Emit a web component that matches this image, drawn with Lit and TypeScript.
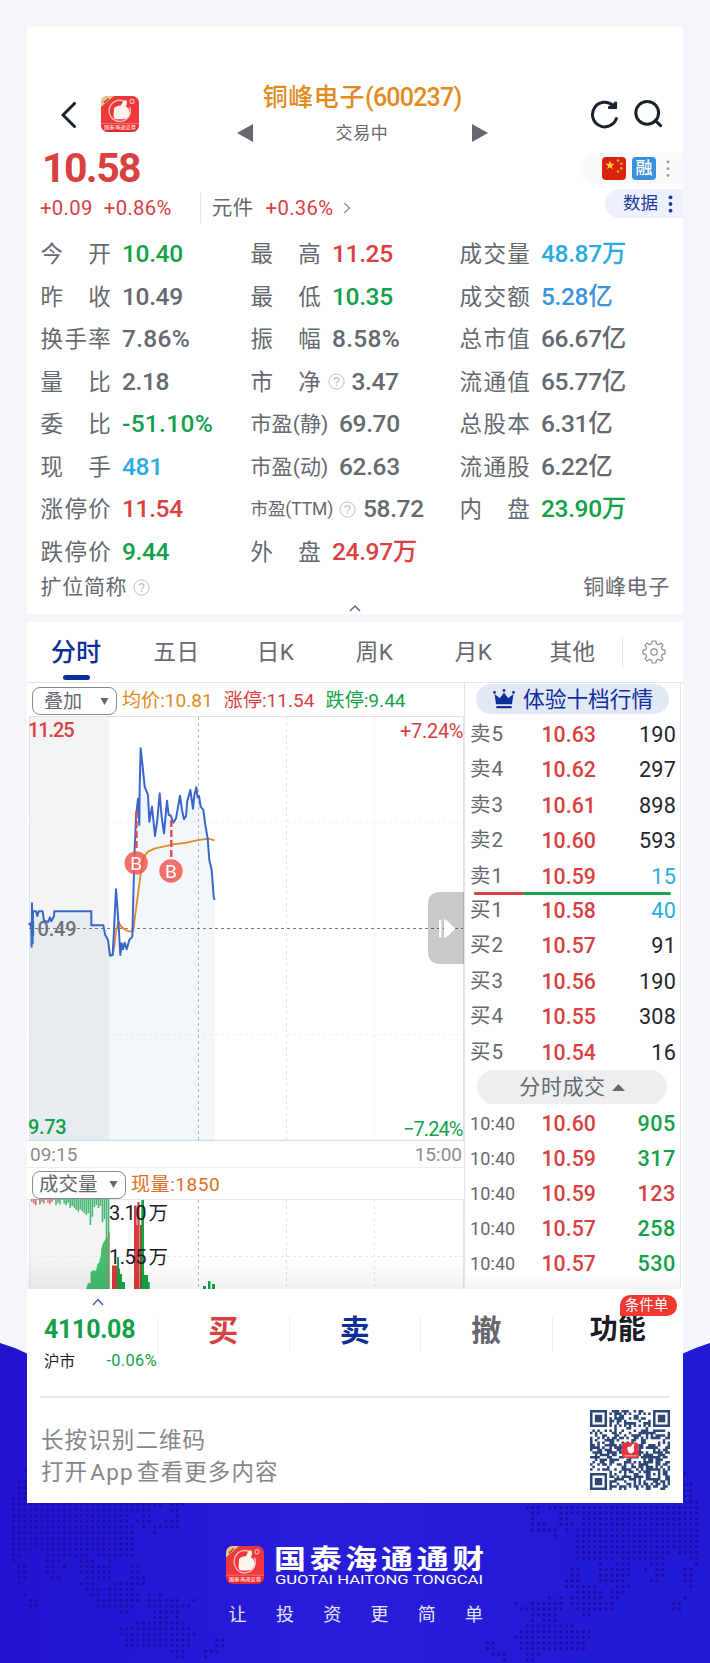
import { LitElement, html, svg, css } from "lit";
import { customElement } from "lit/decorators.js";

type Cell = { label: string; value: string; tone?: string; kind?: string; help?: boolean };

const QUOTES: Cell[][] = [
  [
    { label: "今　开", value: "10.40", tone: "green" },
    { label: "昨　收", value: "10.49" },
    { label: "换手率", value: "7.86%" },
    { label: "量　比", value: "2.18" },
    { label: "委　比", value: "-51.10%", tone: "green" },
    { label: "现　手", value: "481", tone: "cyan" },
    { label: "涨停价", value: "11.54", tone: "red" },
    { label: "跌停价", value: "9.44", tone: "green" },
  ],
  [
    { label: "最　高", value: "11.25", tone: "red" },
    { label: "最　低", value: "10.35", tone: "green" },
    { label: "振　幅", value: "8.58%" },
    { label: "市　净", value: "3.47", help: true },
    { label: "市盈(静)", value: "69.70", kind: "pe" },
    { label: "市盈(动)", value: "62.63", kind: "pe" },
    { label: "市盈(TTM)", value: "58.72", kind: "ttm", help: true },
    { label: "外　盘", value: "24.97万", tone: "red" },
  ],
  [
    { label: "成交量", value: "48.87万", tone: "cyan" },
    { label: "成交额", value: "5.28亿", tone: "azure" },
    { label: "总市值", value: "66.67亿" },
    { label: "流通值", value: "65.77亿" },
    { label: "总股本", value: "6.31亿" },
    { label: "流通股", value: "6.22亿" },
    { label: "内　盘", value: "23.90万", tone: "green" },
  ],
];

const SELLS = [
  ["卖5", "10.63", "190"],
  ["卖4", "10.62", "297"],
  ["卖3", "10.61", "898"],
  ["卖2", "10.60", "593"],
  ["卖1", "10.59", "15"],
];
const BUYS = [
  ["买1", "10.58", "40"],
  ["买2", "10.57", "91"],
  ["买3", "10.56", "190"],
  ["买4", "10.55", "308"],
  ["买5", "10.54", "16"],
];
const TRADES = [
  ["10:40", "10.60", "905", "green"],
  ["10:40", "10.59", "317", "green"],
  ["10:40", "10.59", "123", "red"],
  ["10:40", "10.57", "258", "green"],
  ["10:40", "10.57", "530", "green"],
];

// Price curve, in thirds of a pixel.
const PRICE =
  "30,640 34,655 35,710 36,580 38,700 39,604 48,604 52,618 56,604 68,604 72,632 84,636 90,622 94,634 102,618 103,604 214,604 214,646 250,646 256,676 264,690 270,737 278,735 282,660 288,538 292,590 296,650 301,735 305,700 309,718 314,698 320,718 328,690 337,680 340,560 343,440 348,320 354,266 358,345 359,230 362,115 368,170 374,230 384,255 388,335 396,290 405,378 412,330 419,250 425,320 432,370 441,272 446,315 452,316 460,338 468,325 480,257 486,300 492,328 498,318 502,272 511,240 519,296 523,255 529,232 533,262 537,258 542,290 550,300 556,345 563,385 568,450 575,480 581,560 584,570";
const AVERAGE =
  "270,737 278,735 283,710 288,665 296,635 302,648 315,660 330,665 340,662 345,620 355,545 365,470 372,440 384,425 405,415 430,410 460,403 500,398 530,391 565,386 584,391";

// Dotted world map: [row, [fromCol, toCol]...]
const MAP: [number, ...number[][]][] = [
  [0, [2, 2]], [2, [1, 2]], [3, [1, 2]], [4, [1, 2]], [5, [0, 2]],
  [6, [0, 26], [28, 30]], [7, [0, 24], [28, 29]], [8, [0, 20], [23, 24], [29, 29]],
  [9, [0, 20], [22, 24], [27, 29]], [10, [0, 21], [23, 23], [25, 29]], [11, [0, 21], [25, 25]],
  [12, [0, 21]], [13, [0, 21]], [14, [0, 3], [5, 21]], [15, [0, 1], [6, 13], [15, 21]],
  [16, [0, 0], [6, 8], [12, 14], [17, 17]], [17, [1, 2], [6, 7], [9, 9], [12, 17], [21, 22]],
  [18, [1, 2], [6, 7], [12, 17], [21, 22]], [19, [1, 2], [7, 8], [13, 17], [21, 23]],
  [20, [1, 1], [12, 14], [18, 23]], [21, [13, 15], [17, 21]],
  [22, [2, 2], [14, 15], [17, 22], [24, 24], [26, 26]], [23, [3, 4], [15, 22], [24, 29], [32, 32]],
  [24, [3, 4], [15, 21], [24, 27], [28, 31]], [25, [19, 20], [25, 29]], [26, [25, 27], [29, 29]],
  [27, [22, 30]], [28, [19, 31]], [29, [19, 32]], [30, [20, 31], [36, 37]],
  [31, [20, 31], [36, 37]], [32, [28, 30], [34, 36]], [33, [29, 30], [34, 34]],
];
const mapPath = MAP.map(([r, ...runs]) =>
  runs
    .map(([a, b]) => {
      let d = "";
      for (let c = a; c <= b; c++) d += `M${(12 + c * 5.65).toFixed(1)} ${(1469 + r * 5.65).toFixed(1)}h3v3h-3z`;
      return d;
    })
    .join(""),
).join("");

// 33 x 33 matrix code with three finder squares and one alignment square.
function codePath(): string {
  const n = 33;
  let seed = 20237;
  const rnd = () => ((seed = (seed * 1103515245 + 12345) & 0x7fffffff) >> 12) % 100;
  const square = (x: number, y: number, size: number, i: number, j: number) => {
    const dx = i - x, dy = j - y, m = size - 1;
    if (dx < 0 || dy < 0 || dx > m || dy > m) return null;
    const ring = Math.min(dx, dy, m - dx, m - dy);
    return ring !== 1;
  };
  let d = "";
  for (let j = 0; j < n; j++)
    for (let i = 0; i < n; i++) {
      const r = rnd() < 51;
      let on: boolean | null =
        square(0, 0, 7, i, j) ?? square(n - 7, 0, 7, i, j) ?? square(0, n - 7, 7, i, j) ?? square(24, 24, 5, i, j);
      if (on === null) {
        const quiet = (i < 8 && j < 8) || (i > n - 9 && j < 8) || (i < 8 && j > n - 9);
        on = quiet ? false : i === 6 ? j % 2 === 0 : j === 6 ? i % 2 === 0 : r;
      }
      if (on) d += `M${i} ${j}h1.04v1.04h-1.04z`;
    }
  return d;
}
const CODE = codePath();

const appIcon = (cls: string) => html`<svg class=${cls} viewBox="0 0 38 36" preserveAspectRatio="none">
  <defs>
    <linearGradient id="ig" x1="0" y1="0" x2="0" y2="1">
      <stop offset="0" stop-color="#e8373b" /><stop offset=".7" stop-color="#f4383d" /><stop offset="1" stop-color="#e2242c" />
    </linearGradient>
    <clipPath id="ic"><rect width="38" height="36" rx="6.5" /></clipPath>
  </defs>
  <g clip-path="url(#ic)">
    <rect width="38" height="36" fill="url(#ig)" />
    <path d="M0 0H13L0 11Z" fill="#e9c48c" />
    <path d="M3 6.5L8 2.4" stroke="#8c4a28" stroke-width="2" stroke-dasharray="1.5 .6" />
    <path d="M23 5.2A10.6 10.6 0 1 0 28.6 11" fill="none" stroke="#ffb9b6" stroke-width="1.4" />
    <path d="M13 12.5Q15 9.5 20 9.6L22.2 5Q25.2 3 26 5.6Q26.3 8 24.8 10.6Q28.6 12 28.6 17Q28 23 21.5 23.3H15.5Q12.8 23 12.6 20Z" fill="#fff3ee" />
    <circle cx="31" cy="5.4" r="2" fill="none" stroke="#ffb5b2" stroke-width="1.1" />
    <path d="M0 27.6H38" stroke="#ff8d88" stroke-width=".7" />
    <text x="3" y="33.4" font-size="4.8" font-weight="500" fill="#ffd9d6" textLength="32" lengthAdjust="spacingAndGlyphs">国泰海通证券</text>
  </g>
</svg>`;

const helpIcon = html`<svg class="help" width="17" height="17" viewBox="0 0 17 17" fill="none" stroke="#bfc0c4">
  <circle cx="8.5" cy="8.5" r="7.6" stroke-width="1" />
  <path d="M5.9 6.9Q6.2 4.7 8.6 4.7Q11 4.8 11 6.7Q11 8 9.6 8.7Q8.5 9.2 8.5 10.4" stroke-width="1.2" />
  <path d="M8.5 11.6V13" stroke-width="1.2" />
</svg>`;

// Bars hanging from the top of the volume pane: [x, height, colour].
const hanging: [number, number, string][] = [];
for (let i = 0; i < 39; i++) {
  const x = 4 + i * 2.02;
  const red = i < 11 && i !== 4 && i !== 7;
  let h = 3 + ((i * 7) % 5) * 0.8;
  if (i > 18) h = 5 + (i - 18) * 0.9 + ((i * 5) % 4);
  if (i === 29) h = 26;
  if (i > 30 && i < 35) h = 5 + ((i * 3) % 5);
  if (i === 35 || i === 36) h = 20 + (i % 2) * 3;
  if (i > 36) h = 40;
  hanging.push([x, i < 19 && i % 4 === 3 ? 0.8 : h, red ? "#d9767a" : "#45b873"]);
}

@customElement("app-root")
export class AppRoot extends LitElement {
  static styles = css`
    :host {
      display: block;
      width: 710px;
      height: 1663px;
      overflow: hidden;
      background: #f4f6fb;
      font-family: Roboto, "Noto Sans CJK SC", sans-serif;
      color: #66686f;
    }
    * { box-sizing: border-box; }
    svg { display: block; flex: none; }
    svg text { font-family: Roboto, "Noto Sans CJK SC", sans-serif; }
    .page { display: grid; width: 710px; height: 1663px; }
    .backdrop { grid-area: 1 / 1; }
    .content { grid-area: 1 / 1; display: flex; flex-direction: column; padding: 27px 27px 0; }
    .red { color: #d8413f; }
    .green { color: #12a149; }
    .cyan { color: #2aabe2; }
    .azure { color: #3c93dd; }
    .card { background: #fff; width: 656px; }
    .trade { margin-top: 8px; }

    .quote { height: 587px; display: flex; flex-direction: column; }
    .head { display: flex; height: 122px; padding: 49px 20px 0 34px; align-items: flex-start; }
    .back { margin-top: 26px; }
    .app { width: 38px; height: 36px; margin: 20px 0 0 25px; }
    .title { flex: 1; display: flex; flex-direction: column; align-items: center; width: 252px; margin: 0 75px 0 71px; }
    .name { height: 43px; line-height: 44px; font-size: 25px; font-weight: 500; color: #e18a20; white-space: nowrap; letter-spacing: .6px; }
    .name span { letter-spacing: -.8px; }
    .state { display: flex; width: 251px; justify-content: space-between; align-items: center; height: 27px; font-size: 17px; line-height: 24px; letter-spacing: .6px; }
    .refresh { margin-top: 23px; }
    .search { margin: 23px 0 0 14px; }

    .mid { display: flex; height: 80px; padding-left: 14px; justify-content: space-between; }
    .price { font-size: 41px; font-weight: 700; height: 39px; line-height: 38px; letter-spacing: -1.6px; padding-left: 1px; }
    .change { display: flex; align-items: center; height: 40px; line-height: 40px; font-size: 20.3px; letter-spacing: .35px; margin-left: -1px; }
    .change .pct { margin-left: 11px; }
    .bar { width: 1px; height: 30px; background: #e4e5e8; margin: 0 11px 0 28px; }
    .sector { font-size: 20.5px; margin-right: 12px; }
    .next { margin-left: 9px; }
    .tags { display: flex; flex-direction: column; align-items: flex-end; padding-top: 4px; }
    .tag1 { display: flex; align-items: center; width: 103px; height: 31px; border-radius: 16px 0 0 16px; background: #fafafa; padding-left: 22px; }
    .rong { width: 24px; height: 23px; line-height: 22px; border-radius: 4px; background: #3b8fdc; color: #fff; font-size: 17px; font-weight: 500; text-align: center; margin: 0 10px 0 6px; }
    .tag2 { display: flex; align-items: center; width: 78px; height: 29px; margin-top: 5px; border-radius: 15px 0 0 15px; background: #edf0fd; padding-left: 18px; color: #1c3a9c; font-size: 17.5px; line-height: 25px; }
    .tag2 svg { margin-left: 10px; }

    .grid { display: grid; grid-template-columns: 210px 209px 1fr; padding: 4px 0 0 13.5px; }
    .cell { display: flex; align-items: center; height: 42.5px; line-height: 30px; }
    .label { width: 81.5px; font-size: 22.5px; letter-spacing: 1.4px; white-space: nowrap; }
    .label.short { width: 77px; }
    .label.pe { width: 88.5px; font-size: 21px; letter-spacing: .1px; }
    .label.ttm { width: 88.5px; font-size: 17.5px; letter-spacing: -.1px; }
    .help { margin-right: 7px; }
    .value { font-size: 24.5px; font-weight: 500; white-space: nowrap; letter-spacing: -.35px; }
    .value.ratioed { letter-spacing: .3px; }
    .alias { display: flex; align-items: center; justify-content: space-between; height: 28px; line-height: 28px; padding: 0 13px 0 13.5px; font-size: 21px; letter-spacing: .7px; }
    .alias div { display: flex; align-items: center; gap: 6px; }
    .fold { margin: 3px auto 0; }

    .tabs { display: flex; height: 61px; border-bottom: 1px solid #e4e6e9; align-items: center; }
    .tab { width: 99px; height: 60px; line-height: 61px; text-align: center; font-size: 22.5px; letter-spacing: .5px; padding-left: 2px; }
    .tab.on { display: flex; flex-direction: column; align-items: center; font-size: 25.2px; font-weight: 500; color: #0b2f98; letter-spacing: 0; padding: 0 1px 0 0; }
    .tab.on i { width: 27px; height: 5px; border-radius: 3px; background: #0b2f98; margin-top: -8px; flex: none; }
    .gearbox { height: 31px; border-left: 1px solid #e8e9ec; padding: 3px 0 0 19px; margin-left: 1px; }

    .board { display: flex; height: 606px; }
    .left { width: 437px; height: 606px; }
    .tools { display: flex; align-items: center; height: 33px; line-height: 26px; padding: 3px 0 0 5px; font-size: 19.1px; white-space: nowrap; }
    .select { display: flex; align-items: center; justify-content: space-between; width: 85px; height: 28px; border: 1px solid #898b92; border-radius: 8px; padding: 0 7px 0 11px; line-height: 25px; color: #66686f; }
    .tools .avg { color: #e18a20; margin: 0 11px 0 5px; }
    .tools .up { margin-right: 11px; }
    .tools.vol { height: 31px; padding-top: 2px; }
    .vol .select { width: 94px; padding: 0 7px 0 6px; font-size: 19.5px; }
    .vol .now { color: #e0701f; margin-left: 5px; letter-spacing: .5px; }
    .times { display: flex; justify-content: space-between; height: 27px; line-height: 27px; border-bottom: 1px solid #eeeff1; font-size: 19px; color: #8c8c8e; padding: 0 2px 0 3px; }
    .right { width: 217px; border-left: 1px solid #e4e6e9; border-right: 1px solid #e4e6e9; padding-top: 1px; display: flex; flex-direction: column; background: linear-gradient(#fff 0 590px, #f4f4f4 606px); }
    .promo { display: flex; align-items: center; gap: 8px; width: 193px; height: 30px; line-height: 27px; margin-left: 11px; border-radius: 15px; background: #e2e8f6; color: #0f2f9c; font-size: 21.7px; padding-left: 17px; white-space: nowrap; flex: none; }
    .row { display: grid; grid-template-columns: 54px 72px 80px; height: 35.45px; line-height: 35.45px; padding-left: 5px; white-space: nowrap; }
    .sells { padding-top: 3px; height: 178px; flex: none; }
    .lv { font-size: 20.5px; letter-spacing: .9px; }
    .px { font-size: 21.3px; font-weight: 500; text-align: right; letter-spacing: .05px; color: #d8413f; }
    .qty { font-size: 21.6px; text-align: right; letter-spacing: .2px; color: #23252e; }
    .qty.cyan { color: #2aabe2; }
    .ratio { display: flex; width: 197px; height: 3px; margin: 0 0 -2px 9px; border-radius: 2px; background: #1fa352; flex: none; }
    .ratio i { width: 49px; height: 3px; background: #d8413f; border-radius: 2px 0 0 2px; }
    .buys { height: 177px; flex: none; }
    .deals { display: flex; align-items: center; justify-content: center; gap: 6px; width: 190px; height: 34px; line-height: 32px; flex: none; margin: 0 0 2px 12px; border-radius: 17px; background: #eceef0; font-size: 21px; letter-spacing: .6px; }
    .trades .row { height: 35.1px; line-height: 35.1px; }
    .trades .lv { font-size: 18px; letter-spacing: .1px; }
    .trades .qty { font-weight: 500; letter-spacing: .6px; }
    .trades .qty.green { color: #12a149; }
    .trades .qty.red { color: #d8413f; }

    .dock { display: flex; height: 107px; padding-left: 13px; }
    .index { width: 117px; padding: 9px 0 0 4px; }
    .index svg { margin-left: 48px; }
    .points { font-size: 25px; font-weight: 700; color: #12a149; height: 32px; line-height: 35px; margin-top: 6px; letter-spacing: -.3px; }
    .market { display: flex; align-items: center; justify-content: space-between; font-size: 15.5px; height: 32px; color: #1c1d28; white-space: nowrap; width: 113px; }
    .market .green { font-size: 16.3px; letter-spacing: .4px; }
    .act { flex: 1; height: 35px; line-height: 28px; margin-top: 28px; border-left: 1px solid #eff0f2; text-align: center; font-size: 30px; font-weight: 700; position: relative; }
    .act.sell { color: #0b2f98; }
    .act.more { color: #1b1c26; font-size: 28px; line-height: 26px; }
    .badge { position: absolute; left: 67px; top: -22px; width: 57px; height: 21px; line-height: 21px; border-radius: 10px 10px 10px 1px; background: #ef3931; color: #fff; font-size: 14.5px; font-weight: 400; padding-right: 3px; }
    .rule { height: 2px; margin: 0 13px; background: #e6e7e9; }
    .share { display: flex; justify-content: space-between; height: 105px; padding: 12px 13px 0 14px; }
    .tip { font-size: 22.5px; line-height: 32px; letter-spacing: 1.1px; padding-top: 14px; color: #85868b; white-space: nowrap; }
    .tip span { margin: 0 3px 0 2px; letter-spacing: 1.3px; }
    .foot { display: flex; flex-direction: column; align-items: center; padding-top: 42px; color: #fff; }
    .brand { display: flex; gap: 11px; }
    .logo { width: 38px; height: 38px; margin-top: 1px; }
    .slogan { font-size: 18px; letter-spacing: 29.3px; height: 30px; line-height: 30px; margin-top: 13px; padding-left: 31px; color: #e6e6fb; }
  `;

  private backdrop() {
    return html`<svg class="backdrop" width="710" height="1663" viewBox="0 0 710 1663">
      <defs>
        <linearGradient id="bg" x1="0" x2="1" y1="0" y2="0">
          <stop offset="0" stop-color="#2113d0" /><stop offset=".45" stop-color="#291dda" /><stop offset="1" stop-color="#2119d4" />
        </linearGradient>
      </defs>
      <path d="M0 1343Q14 1347 27 1353.5Q355 1480 683 1353.5Q697 1347 710 1343V1663H0Z" fill="url(#bg)" />
      <path d=${mapPath} fill="#1a0fae" />
      <path d=${mapPath} fill="#1a0fae" transform="translate(710 3) scale(-1 1)" />
    </svg>`;
  }

  private cell(c: Cell) {
    return html`<div class="cell">
      <span class="label ${c.kind ?? ""} ${c.help && !c.kind ? "short" : ""}">${c.label}</span>
      ${c.help ? helpIcon : ""}<span class="value ${c.tone ?? ""} ${c.value.endsWith("%") ? "ratioed" : ""}">${c.value}</span>
    </div>`;
  }

  private row(r: string[], tone = "") {
    return html`<div class="row"><span class="lv">${r[0]}</span><span class="px">${r[1]}</span><span class="qty ${tone}">${r[2]}</span></div>`;
  }

  private priceChart() {
    return html`<svg width="437" height="425" viewBox="27 716 437 425">
      <rect x="29" y="716" width="80" height="425" fill="#f4f4f4" />
      <path d="M29 716.5H463.5V1141M29.5 716V1141" fill="none" stroke="#dfe1e3" />
      <path d="M27 1140.5H464" stroke="#dcdfe1" stroke-width="1.5" />
      <g stroke-dasharray="3 3" fill="none">
        <path d="M198.5 717V1140" stroke="#b9b9bb" />
        <path d="M286.5 717V1140" stroke="#e2e2e4" />
        <path d="M374.5 717V1140M29 822H463M29 1034.5H463" stroke="#f0f0f1" />
      </g>
      <g transform="translate(20 710) scale(.33333)">
        <polygon points="${PRICE} 584,1292 30,1292" fill="#3c8cc0" fill-opacity=".065" />
      </g>
      <path d="M29 928.5H463" stroke="#77787c" stroke-dasharray="3 3" />
      <text x="26.5" y="935.5" font-size="20" font-weight="500" fill="#6d7078" textLength="50">10.49</text>
      <g transform="translate(20 710) scale(.33333)" fill="none" stroke-linejoin="round">
        <polyline points=${AVERAGE} stroke="#e08a2c" stroke-width="5.4" />
        <polyline points=${PRICE} stroke="#3a66cc" stroke-width="6" />
      </g>
      <path d="M136.5 811V850" stroke="#e04a52" stroke-width="2.4" stroke-dasharray="7 3" />
      <path d="M171.3 820V858" stroke="#e04a52" stroke-width="2.4" stroke-dasharray="7 3" />
      <circle cx="136.2" cy="863" r="11.7" fill="#f3574f" fill-opacity=".85" />
      <circle cx="171" cy="871" r="11.7" fill="#f3574f" fill-opacity=".85" />
      <g fill="#fff" font-size="19" text-anchor="middle">
        <text x="136.2" y="870">B</text><text x="171" y="878">B</text>
      </g>
      <g font-size="20">
        <text x="28" y="737" fill="#d8413f" font-weight="500" textLength="46.5">11.25</text>
        <text x="400" y="738" fill="#d8413f" textLength="63.5">+7.24%</text>
        <text x="28" y="1134" fill="#12a149" font-weight="500" textLength="38.5">9.73</text>
        <text x="403" y="1136" fill="#12a149" textLength="60.5">−7.24%</text>
      </g>
      <path d="M464 892H440Q428 892 428 904V952Q428 964 440 964H464Z" fill="#000" fill-opacity=".21" />
      <path d="M439 920h2.4v17.5h-2.4zM444 919.5L446 919.5L455.5 928.8L446 937.5H444Z" fill="#fff" />
    </svg>`;
  }

  private volumeChart() {
    return html`<svg width="437" height="90" viewBox="27 1199 437 90">
      <defs>
        <linearGradient id="sh" x1="0" y1="0" x2="0" y2="1"><stop offset="0" stop-color="#000" stop-opacity="0" /><stop offset="1" stop-color="#000" stop-opacity=".055" /></linearGradient>
      </defs>
      <rect x="29" y="1199" width="80" height="90" fill="#f4f4f4" />
      <path d="M27 1199.5H464M463.5 1199V1289M29.5 1199V1289" stroke="#e4e6e8" />
      <g stroke-dasharray="3 3" fill="none">
        <path d="M198.5 1200V1289" stroke="#b9b9bb" />
        <path d="M286.5 1200V1289" stroke="#e2e2e4" />
        <path d="M374.5 1200V1289M29 1256.5H463" stroke="#e8e8e9" />
      </g>
      ${hanging.map(([x, h, c]) => svg`<rect x=${27 + x} y="1199" width="1.6" height=${h} fill=${c} />`)}
      <path d="M86 1289L88 1283H90.5V1273L92 1270.5H96L97.5 1264L99 1262.5L101 1255V1250L103 1243L106 1238.5L108 1237L109.5 1232V1289Z" fill="#45bd71" />
      <path d="M106.5 1238V1289M109 1232V1289" stroke="#83996b" stroke-width="1.2" />
      <path d="M112 1265.5H117V1289H112Z" fill="#d9393a" />
      <path d="M117 1268.5V1257H119V1268.5H120V1274H122V1282H125V1289H117Z" fill="#14a343" />
      <path d="M134 1205.5H136.6V1225H137.4V1202H139.6V1289H134Z" fill="#d9393a" />
      <path d="M140 1225H142.3V1289H140Z" fill="#a8392f" />
      <path d="M141.3 1200H144V1275H148V1282H149.7V1289H141.3Z" fill="#14a343" />
      <path d="M203 1289V1286H206V1289ZM208 1289V1281H210.5V1289ZM212 1289V1284H215V1289Z" fill="#14a343" />
      <rect x="27" y="1258" width="437" height="31" fill="url(#sh)" />
      <g font-size="20" fill="#1c1d2a" letter-spacing="-.5">
        <text x="109" y="1220">3.10<tspan dx="2.5" font-size="19.5">万</tspan></text>
        <text x="109" y="1264">1.55<tspan dx="2.5" font-size="19.5">万</tspan></text>
      </g>
    </svg>`;
  }

  render() {
    const caret = html`<svg width="9" height="9" viewBox="0 0 9 9"><path d="M.5 1H8.5L4.5 8Z" fill="#66686f" /></svg>`;
    return html`<div class="page">
      ${this.backdrop()}
      <div class="content">
        <section class="card quote">
          <div class="head">
            <svg class="back" width="15" height="26" viewBox="0 0 15 26" fill="none"><path d="M13.5 1.5L2 13L13.5 24.5" stroke="#18212e" stroke-width="3" stroke-linecap="round" /></svg>
            ${appIcon("app")}
            <div class="title">
              <div class="name">铜峰电子<span>(600237)</span></div>
              <div class="state">
                <svg width="16" height="18" viewBox="0 0 16 18"><path d="M0 9L16 0V18Z" fill="#66686f" /></svg>
                交易中
                <svg width="16" height="18" viewBox="0 0 16 18"><path d="M16 9L0 0V18Z" fill="#66686f" /></svg>
              </div>
            </div>
            <svg class="refresh" width="30" height="30" viewBox="0 0 30 30" fill="none" stroke="#18212e" stroke-width="3" stroke-linecap="round">
              <path d="M27.4 19.6A12.3 12.3 0 1 1 24 6.4" />
              <path d="M27.6 3.4V9.6H19.6V7.4L24 6.6L25.4 3.4Z" fill="#18212e" stroke-width="1" stroke-linejoin="round" />
            </svg>
            <svg class="search" width="30" height="30" viewBox="0 0 30 30" fill="none" stroke="#18212e" stroke-width="3" stroke-linecap="round">
              <circle cx="14.2" cy="13.8" r="11.4" /><path d="M22.4 21.6L27.6 26.6" />
            </svg>
          </div>
          <div class="mid">
            <div>
              <div class="price red">10.58</div>
              <div class="change">
                <span class="red">+0.09</span><span class="red pct">+0.86%</span><i class="bar"></i>
                <span class="sector">元件</span><span class="red">+0.36%</span>
                <svg class="next" width="8" height="12" viewBox="0 0 8 12" fill="none"><path d="M1.2 1L6.4 6L1.2 11" stroke="#97989d" stroke-width="1.5" /></svg>
              </div>
            </div>
            <div class="tags">
              <div class="tag1">
                <svg width="24" height="23" viewBox="0 0 24 23">
                  <rect width="24" height="23" rx="4" fill="#d9230f" />
                  <path d="M8 3.5L9.1 6.8H12.6L9.8 8.9L10.9 12.3L8 10.2L5.1 12.3L6.2 8.9L3.4 6.8H6.9Z" fill="#ffd42e" />
                  <g fill="#f6a623"><circle cx="16" cy="3.6" r="1.3" /><circle cx="19.4" cy="6.8" r="1.3" /><circle cx="19.4" cy="11.4" r="1.3" /><circle cx="16" cy="14.6" r="1.3" /></g>
                </svg>
                <span class="rong">融</span>
                <svg width="4" height="17" viewBox="0 0 4 17" fill="#9a9ba0"><circle cx="2" cy="2" r="1.4" /><circle cx="2" cy="8.7" r="1.4" /><circle cx="2" cy="15.4" r="1.4" /></svg>
              </div>
              <div class="tag2">数据<svg width="5" height="18" viewBox="0 0 5 18" fill="#1c3a9c"><circle cx="2.5" cy="2.3" r="1.9" /><circle cx="2.5" cy="9" r="1.9" /><circle cx="2.5" cy="15.7" r="1.9" /></svg></div>
            </div>
          </div>
          <div class="grid">${QUOTES.map((col) => html`<div>${col.map((c) => this.cell(c))}</div>`)}</div>
          <div class="alias"><div>扩位简称${helpIcon}</div><span>铜峰电子</span></div>
          <svg class="fold" width="12" height="8" viewBox="0 0 12 8" fill="none"><path d="M1 7L6 2L11 7" stroke="#66686f" stroke-width="1.5" /></svg>
        </section>

        <section class="card trade">
          <nav class="tabs">
            <div class="tab on">分时<i></i></div>
            <div class="tab">五日</div><div class="tab">日K</div><div class="tab">周K</div><div class="tab">月K</div><div class="tab">其他</div>
            <div class="gearbox">
              <svg width="24" height="24" viewBox="0 0 24 24" fill="none" stroke="#8b8d93" stroke-width="1.2" stroke-linejoin="round">
                <path d="M10.2 1H13.8L14.4 3.8L16.5 4.7L18.9 3.1L21 5.2L19.4 7.6L20.2 9.6L23 10.2V13.8L20.2 14.4L19.4 16.4L21 18.8L18.9 20.9L16.5 19.3L14.4 20.2L13.8 23H10.2L9.6 20.2L7.5 19.3L5.1 20.9L3 18.8L4.6 16.4L3.8 14.4L1 13.8V10.2L3.8 9.6L4.6 7.6L3 5.2L5.1 3.1L7.5 4.7L9.6 3.8Z" />
                <circle cx="12" cy="12" r="3.2" />
              </svg>
            </div>
          </nav>
          <div class="board">
            <div class="left">
              <div class="tools">
                <div class="select">叠加${caret}</div>
                <span class="avg">均价:10.81</span><span class="up red">涨停:11.54</span><span class="green">跌停:9.44</span>
              </div>
              ${this.priceChart()}
              <div class="times"><span>09:15</span><span>15:00</span></div>
              <div class="tools vol"><div class="select">成交量${caret}</div><span class="now">现量:1850</span></div>
              ${this.volumeChart()}
            </div>
            <div class="right">
              <div class="promo">
                <svg width="22" height="20" viewBox="0 0 22 20" fill="#0f2f9c">
                  <path d="M3 15.3L1.6 5L6.8 9.2L11 3.4L15.2 9.2L20.4 5L19 15.3ZM3.4 17H18.6V19.3H3.4Z" />
                  <circle cx="1.5" cy="3.4" r="1.4" /><circle cx="11" cy="1.5" r="1.4" /><circle cx="20.5" cy="3.4" r="1.4" />
                </svg>体验十档行情
              </div>
              <div class="sells">${SELLS.map((r, i) => this.row(r, i === 4 ? "cyan" : ""))}</div>
              <div class="ratio"><i></i></div>
              <div class="buys">${BUYS.map((r, i) => this.row(r, i === 0 ? "cyan" : ""))}</div>
              <div class="deals">分时成交<svg width="13" height="7" viewBox="0 0 13 7"><path d="M0 7L6.5 0L13 7Z" fill="#66686f" /></svg></div>
              <div class="trades">${TRADES.map((r) => this.row(r, r[3]))}</div>
            </div>
          </div>
          <div class="dock">
            <div class="index">
              <svg width="12" height="8" viewBox="0 0 12 8" fill="none"><path d="M1 7L6 1.6L11 7" stroke="#46609f" stroke-width="1.5" /></svg>
              <div class="points">4110.08</div>
              <div class="market"><span>沪市</span><span class="green">-0.06%</span></div>
            </div>
            <div class="act red">买</div>
            <div class="act sell">卖</div>
            <div class="act">撤</div>
            <div class="act more">功能<span class="badge">条件单</span></div>
          </div>
          <div class="rule"></div>
          <div class="share">
            <div class="tip">长按识别二维码<br />打开<span>App</span>查看更多内容</div>
            <svg width="80" height="80" viewBox="0 0 33 33">
              <rect width="33" height="33" fill="#fff" /><path d=${CODE} fill="#2e4778" />
              <rect x="13.2" y="13.4" width="6.8" height="6.4" rx="1.2" fill="#e7333a" />
              <path d="M15.4 15.4L17 15L17.6 14L18.4 14.2L18 15.4Q18.9 17.4 17 17.9Q15.4 18 15.4 15.4Z" fill="#fff" />
              <path d="M14.2 18.9H19.3" stroke="#fbb" stroke-width=".4" />
            </svg>
          </div>
        </section>

        <footer class="foot">
          <div class="brand">
            ${appIcon("logo")}
            <svg width="210" height="42" viewBox="0 0 210 42" fill="#fff">
              <text x="-1" y="24" font-size="27" font-weight="700" letter-spacing="3.2" textLength="214" lengthAdjust="spacingAndGlyphs">国泰海通通财</text>
              <text x="0" y="38.8" font-size="12.2" textLength="208" lengthAdjust="spacingAndGlyphs">GUOTAI HAITONG TONGCAI</text>
            </svg>
          </div>
          <div class="slogan">让投资更简单</div>
        </footer>
      </div>
    </div>`;
  }
}
